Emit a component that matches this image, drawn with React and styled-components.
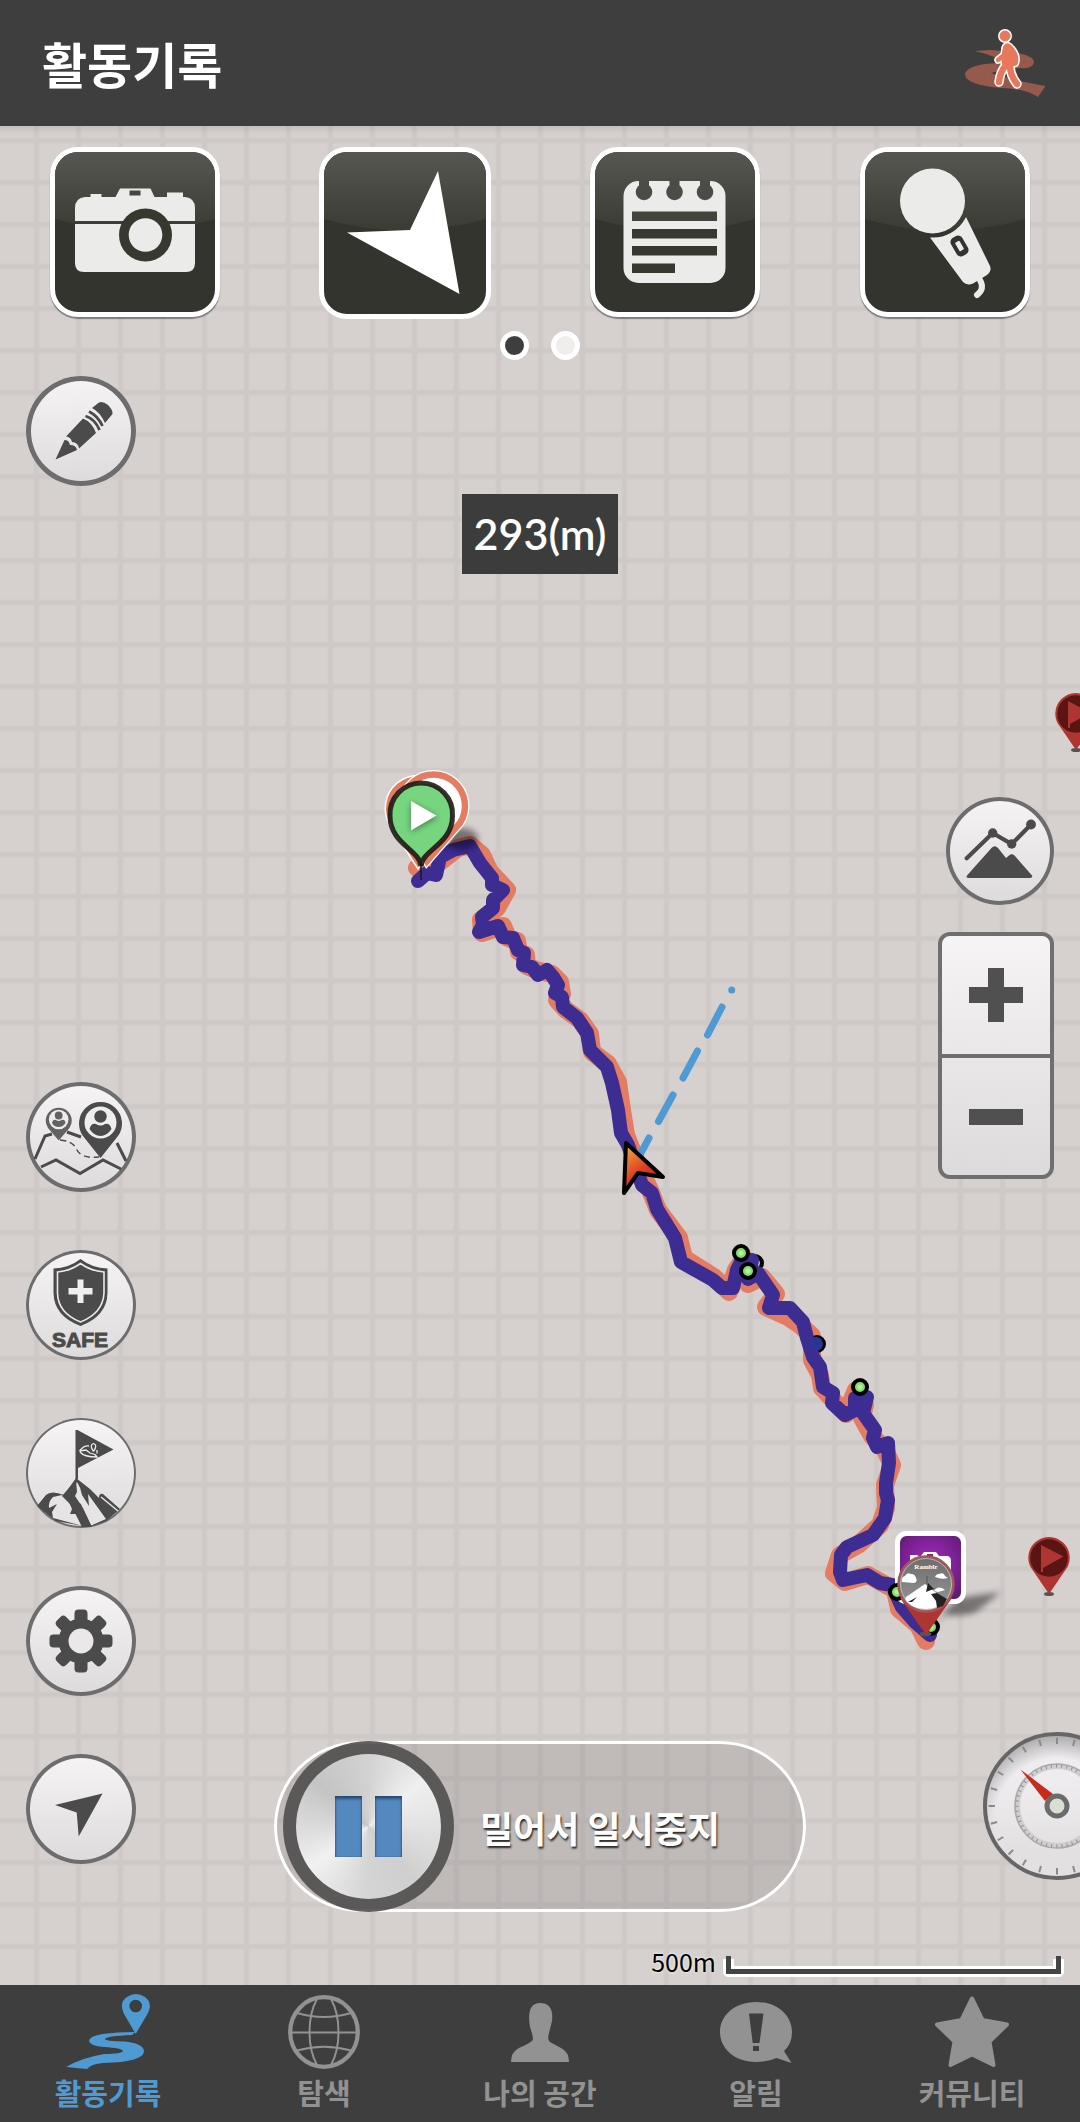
import React, { useState } from 'react';
import styled, { createGlobalStyle, css } from 'styled-components';

const GlobalStyle = createGlobalStyle`
  * {
    box-sizing: border-box;
  }
  body {
    margin: 0;
    font-family: 'Noto Sans CJK KR', sans-serif;
    background: #3e3e3e;
  }
  button {
    padding: 0;
    border: 0;
    background: none;
    color: inherit;
    font: inherit;
    cursor: pointer;
  }
  svg {
    display: block;
  }
`;

const Page = styled.div`
  display: flex;
  flex-direction: column;
  min-height: 100vh;
  overflow: hidden;
`;

const Header = styled.header`
  display: flex;
  align-items: center;
  justify-content: space-between;
  padding: 28px 32px 28px 42px;
  background: #3e3e3e;
`;

const Title = styled.h1`
  margin: 0;
  color: #fff;
  font-size: 49px;
  font-weight: 700;
  line-height: 70px;
`;

const MapArea = styled.main`
  position: relative;
  isolation: isolate;
  flex: 1;
  display: flex;
  flex-direction: column;
  padding: 21px 0 8px;
  background-color: #d6d0cf;
  background-image: linear-gradient(rgba(0, 0, 0, 0.08), transparent 8px),
    linear-gradient(
      90deg,
      transparent 33px,
      #cec8c7 35px,
      #cec8c7 38px,
      transparent 40px
    ),
    linear-gradient(
      transparent 11px,
      #cec8c7 13px,
      #cec8c7 16px,
      transparent 18px
    );
  background-size: 100% 8px, 42px 42px, 42px 42px;
  background-repeat: repeat-x, repeat, repeat;
`;

const RouteLayer = styled.svg`
  position: absolute;
  inset: 0;
  z-index: -1;
  width: 100%;
  height: 100%;
`;

const Tools = styled.div`
  display: grid;
  grid-template-columns: repeat(4, 1fr);
  justify-items: center;
  align-items: start;
`;

const ToolButton = styled.button`
  overflow: hidden;
  border: 5px solid #fff;
  border-radius: 28px;
  background: #33342d;
  box-shadow: ${(props) =>
    props.$flat ? 'none' : '0 2px 1px rgba(0, 0, 0, 0.4)'};
`;

const Dots = styled.div`
  display: flex;
  justify-content: center;
  gap: 22px;
  padding: 12px 0 16px;
`;

const Dot = styled.button`
  width: 29px;
  height: 29px;
  border: 5px solid #fff;
  border-radius: 50%;
  background: ${(props) => (props.$active ? '#3e3e3e' : '#efeeec')};
`;

const Stage = styled.div`
  flex: 1;
  display: grid;
  grid-template-columns: 1fr auto 1fr;
`;

const Column = styled.div`
  display: flex;
  flex-direction: column;
`;

const LeftColumn = styled(Column)`
  align-items: flex-start;
  padding: 0 0 48px 26px;
`;

const CenterColumn = styled(Column)`
  align-items: center;
  justify-content: space-between;
  padding-top: 118px;
`;

const RightColumn = styled(Column)`
  align-items: flex-end;
  gap: 27px;
  padding: 421px 26px 32px 0;
`;

const ButtonStack = styled.div`
  display: flex;
  flex-direction: column;
  gap: 58px;
  margin-top: auto;
`;

const glass = css`
  background: linear-gradient(
    rgba(248, 246, 247, 0.95),
    rgba(221, 219, 220, 0.95)
  );
`;

const RoundButton = styled.button`
  ${glass}
  width: ${(props) => props.$size || 110}px;
  height: ${(props) => props.$size || 110}px;
  overflow: hidden;
  border-radius: 50%;
  box-shadow: inset 0 0 0 ${(props) => props.$ring || 4}px #6e6d6d;
  color: #4b4b4b;
`;

const Distance = styled.div`
  padding: 10px 12px;
  background: #3c3c3c;
  color: #fff;
  font-family: Lato, 'Noto Sans CJK KR', sans-serif;
  font-size: 43px;
  font-weight: 600;
  line-height: 60px;
`;

const SlideTrack = styled.div`
  display: flex;
  align-items: center;
  gap: 26px;
  width: 532px;
  padding-left: 9px;
  border-radius: 86px;
  background: rgba(0, 0, 0, 0.1);
  box-shadow: inset 0 0 0 3px #fff;
`;

const Knob = styled.button`
  display: flex;
  align-items: center;
  justify-content: center;
  gap: 13px;
  width: 171px;
  height: 171px;
  border: 13px solid rgba(80, 78, 78, 0.9);
  border-radius: 50%;
  background: conic-gradient(
      from 0deg,
      #d2d2d2,
      #efefef 50deg,
      #e6e6e6 80deg,
      #cfcfcf 140deg,
      #d4d4d4 180deg,
      #f1f1f1 235deg,
      #dedede 265deg,
      #c4c4c4 310deg,
      #d2d2d2
    )
    padding-box;
`;

const PauseBar = styled.span`
  width: 27px;
  height: 61px;
  background: #5489bf;
  box-shadow: inset 0 3px 3px rgba(0, 20, 50, 0.5),
    inset 0 0 2px rgba(0, 20, 50, 0.4);
`;

const SlideLabel = styled.span`
  color: #fff;
  font-size: 36px;
  font-weight: 700;
  line-height: 52px;
  text-shadow: 1px 2px 2px rgba(0, 0, 0, 0.8);
`;

const ZoomBox = styled.div`
  ${glass}
  display: flex;
  flex-direction: column;
  width: 116px;
  overflow: hidden;
  border: 4px solid #6f6f6f;
  border-radius: 12px;
`;

const ZoomButton = styled.button`
  display: flex;
  align-items: center;
  justify-content: center;
  height: 118px;
  color: #505050;

  & + & {
    height: 121px;
    border-top: 4px solid #6f6f6f;
  }
`;

const CompassButton = styled.button`
  margin: auto -77px 0 0;
`;

const Scale = styled.div`
  display: flex;
  align-items: flex-end;
  justify-content: flex-end;
  gap: 7px;
  padding: 33px 16px 0 0;
  color: #000;
  font-size: 25px;
  font-weight: 400;
  line-height: 32px;
  text-shadow: 0 0 3px #fff;
`;

const TabBar = styled.nav`
  display: grid;
  grid-template-columns: repeat(5, 1fr);
  padding: 8px 0 9px;
  background: #3e3e3e;
`;

const Tab = styled.button`
  display: flex;
  flex-direction: column;
  align-items: center;
  color: ${(props) => (props.$active ? '#4f9ad3' : '#929292')};
  font-size: 29px;
  font-weight: 700;
  line-height: 42px;
`;

const TabIcon = styled.span`
  display: flex;
  align-items: center;
  height: 78px;
`;

const ToolIcon = ({ id, size = 160, children }) => (
  <svg width={size} height={size} viewBox={`0 0 ${size} ${size}`}>
    <defs>
      <linearGradient id={id} x1="0" y1="0" x2="0" y2="1">
        <stop offset="0" stopColor="#565750" />
        <stop offset="1" stopColor="#3a3b33" />
      </linearGradient>
    </defs>
    <path
      d={`M0 0H${size}V67Q${size / 2} 90 0 67Z`}
      fill={`url(#${id})`}
    />
    {children}
  </svg>
);

const CameraIcon = () => (
  <ToolIcon id="gloss-camera">
    <path
      fill="#ebebe9"
      d="M30 45H35.500V42H46.500V45H60.500L65 36.500H95.500L99.500 45H112V40.500H128V45H130Q140 46 140 56V69H20V56Q20 46 30 45Z"
    />
    <path fill="#ebebe9" d="M20 72H140V111Q140 120 131 120H29Q20 120 20 111Z" />
    <rect x="74.500" y="38.500" width="11" height="5" fill="#45463f" />
    <circle cx="90.500" cy="83" r="26.500" fill="#37382f" />
    <circle cx="90.500" cy="83" r="16.800" fill="#ebebe9" />
  </ToolIcon>
);

const DirectionIcon = () => (
  <ToolIcon id="gloss-direction" size={162}>
    <path fill="#fff" d="M114 19L135.500 142L23 80.500L86 78Z" />
  </ToolIcon>
);

const NoteIcon = () => (
  <ToolIcon id="gloss-note">
    <rect x="28.500" y="29" width="102" height="102" rx="15" fill="#ebebe9" />
    <g fill="#4b4c45">
      {[49, 79.5, 110].map((x) => (
        <React.Fragment key={x}>
          <rect x={x - 5} y="28" width="10" height="10" />
          <circle cx={x} cy="40" r="8.300" />
        </React.Fragment>
      ))}
    </g>
    <g fill="#37382f">
      <rect x="37" y="59.500" width="85" height="9.500" fill="#43443c" />
      <rect x="37" y="77" width="85" height="9.500" />
      <rect x="37" y="94" width="85" height="9.500" />
      <rect x="37" y="111.500" width="43" height="9.500" />
    </g>
  </ToolIcon>
);

const MicIcon = () => (
  <ToolIcon id="gloss-mic">
    <circle cx="67.500" cy="49" r="32.500" fill="#ebebe9" />
    <path
      fill="#ebebe9"
      d="M65 85.500A37 37 0 0 0 101 65L125 114Q127 119 122 123L108 131.500Q102 134 98 130Z"
    />
    <path
      d="M115 128Q120 137 112 143"
      fill="none"
      stroke="#ebebe9"
      strokeWidth="6"
      strokeLinecap="round"
    />
    <g transform="rotate(-30 94.500 94)">
      <rect x="88" y="83.500" width="13" height="21" rx="5" fill="#33342d" />
      <rect x="92" y="89" width="5" height="10" rx="1" fill="#ebebe9" />
    </g>
  </ToolIcon>
);

const RoundIcon = ({ size = 110, children }) => (
  <svg
    width={size}
    height={size}
    viewBox={`0 0 ${size} ${size}`}
    fill="currentColor"
  >
    {children}
  </svg>
);

const PencilIcon = () => (
  <RoundIcon>
    <path d="M29.500 83.500L38.500 64Q43 64 44 69Q50 69 51 74Z" />
    <path d="M40 60.500L57 42.500Q66 46 70 57L53 72.500Q52 66 46 66Q45 61 40 60.500Z" />
    <path d="M66 32L73 26.500Q77 25 82 29Q87 34 86.500 38L79 47Q74 36 66 32Z" />
    <g fill="none" stroke="currentColor" strokeWidth="2.800">
      <path d="M59.500 40Q69 43 73.500 54" />
      <path d="M63 35.500Q72 40 76.500 50" />
    </g>
  </RoundIcon>
);

const PersonPinsIcon = () => (
  <RoundIcon>
    <g fill="none" stroke="currentColor" strokeWidth="3">
      <path d="M9 77L19 54L26 52M41 50L55 55M91 61L100 79" />
      <path d="M15 85L30 78L54 91.500L77 78L95 87" />
      <path
        d="M34 58Q46 59 50 66Q54 77 73 75"
        strokeWidth="1.500"
        strokeDasharray="6 4"
      />
    </g>
    <path d="M74.500 76L57 54A21.500 21.500 0 1 1 92 54Z" />
    <circle cx="74.500" cy="40.500" r="16" fill="#efedee" />
    <circle cx="74.500" cy="34.500" r="6.200" />
    <path d="M63.500 47Q65 41 70 42Q74.500 45 79 42Q84 41 85.500 47Q81 54 74.500 54Q68 54 63.500 47Z" />
    <g opacity="0.850">
      <path d="M32.700 58.500L22 46A13 13 0 1 1 43.500 46Z" />
      <circle cx="32.700" cy="37.500" r="9.800" fill="#efedee" />
      <circle cx="32.700" cy="33.500" r="3.900" />
      <path d="M26 41Q27 37 30 38Q32.700 40 35.500 38Q39 37 39.500 41Q37 45 32.700 45Q28 45 26 41Z" />
    </g>
  </RoundIcon>
);

const SafeText = styled.text`
  font-family: 'Liberation Sans', sans-serif;
  font-size: 21px;
  font-weight: 700;
`;

const SafeIcon = () => (
  <RoundIcon>
    <path d="M54.500 9Q66 18 81.500 18.500V43Q81 66 54.500 76Q28 66 27.500 43V18.500Q43 18 54.500 9Z" />
    <path
      d="M54.500 13.500Q65 21 78 22V43Q77 63 54.500 72Q32 63 31.500 43V22Q44 21 54.500 13.500Z"
      fill="none"
      stroke="#eceaeb"
      strokeWidth="1.600"
    />
    <path
      d="M51.500 29.500H57.500V38H66.500V44.500H57.500V53H51.500V44.500H42.500V38H51.500Z"
      fill="#f0eeef"
    />
    <SafeText
      x="54"
      y="97"
      textAnchor="middle"
      stroke="currentColor"
      strokeWidth="1"
    >
      SAFE
    </SafeText>
  </RoundIcon>
);

const SummitIcon = () => (
  <RoundIcon>
    <path d="M49.500 12H51.500L87.500 31.500L52 50V61H49.500Z" />
    <path
      d="M53.500 33Q58 27 63 28M54 34Q58 39 71 39L69 36.500M71 32V35.500M53.500 33L60 32L64 35L69 36.500M67.500 33.500Q63 27 67.500 25.500Q72 27 67.500 33.500"
      fill="none"
      stroke="#efedee"
      strokeWidth="1.300"
    />
    <path d="M11 88L20 77Q25 72 38 77L50 60L64 71L73 80Q73 75 77 76L94 91L80 103L63 109L30 103Z" />
    <g fill="#e6e4e5">
      <path d="M23 90Q22 84 27 79L36 77L42 82L46 91L44 96L51 96L57 108L27 100L26 94L31 86Z" />
      <path d="M41 79L51 64Q55 70 56 77L63 88L62 76L80 101L64 108L57 93L55 86Z" />
    </g>
    <path d="M36 78L50 62L51 74L49 78L57 90L66 109H56L49 95L46 96L48 90Z" />
    <path d="M75 79L92 93" stroke="#e6e4e5" strokeWidth="1.500" />
  </RoundIcon>
);

const GearIcon = () => (
  <RoundIcon>
    {[0, 45, 90, 135].map((angle) => (
      <rect
        key={angle}
        x="48.500"
        y="23.500"
        width="13"
        height="63"
        rx="4"
        transform={`rotate(${angle} 55 55)`}
      />
    ))}
    <circle cx="55" cy="55" r="22.500" />
    <circle cx="55" cy="55" r="12.500" fill="#eae8e9" />
  </RoundIcon>
);

const LocateIcon = () => (
  <RoundIcon>
    <path d="M76.500 39.500L52.700 82.500L50.700 58.500L29 51Z" />
  </RoundIcon>
);

const AltitudeIcon = () => (
  <RoundIcon size={108}>
    <path
      d="M20.700 61.300L46.700 36L65.700 47L85 27.500"
      fill="none"
      stroke="currentColor"
      strokeWidth="4.200"
      strokeLinecap="round"
    />
    <circle cx="46.700" cy="36" r="4.700" />
    <circle cx="65.700" cy="47" r="4.700" />
    <circle cx="85" cy="27.500" r="4.900" />
    <path d="M21 78.500L45.500 51Q48.700 47.500 52 51L60 61L63 58.500Q65.700 56 68.500 58.500L86 78.500Q87 81 84 81H23Q19.500 81 21 78.500Z" />
  </RoundIcon>
);

const ticks = Array.from({ length: 24 }, (_, i) => i * 15);

const CompassIcon = () => (
  <svg width="148" height="148" viewBox="0 0 148 148">
    <defs>
      <radialGradient id="dial" cx="0.500" cy="0.600" r="0.600">
        <stop offset="0.720" stopColor="#eeecee" />
        <stop offset="1" stopColor="#a9a7a8" />
      </radialGradient>
      <linearGradient id="dial-fade" x1="0" y1="0" x2="0" y2="1">
        <stop offset="0.300" stopColor="#e6e4e5" stopOpacity="0" />
        <stop offset="0.800" stopColor="#e2e0e1" />
      </linearGradient>
    </defs>
    <circle cx="74" cy="74" r="72" fill="url(#dial)" />
    <circle
      cx="74"
      cy="74"
      r="72"
      fill="url(#dial-fade)"
      stroke="#666"
      strokeWidth="4"
    />
    {ticks.map((angle) => (
      <path
        key={angle}
        d="M74 5.500V12"
        stroke="#8b8b8b"
        strokeWidth="2"
        transform={`rotate(${angle} 74 74)`}
      />
    ))}
    <g fill="none">
      <circle cx="74" cy="74" r="39.500" stroke="#d0cfcf" strokeWidth="5" />
      <circle cx="74" cy="74" r="42" stroke="#a9a9a9" strokeWidth="1.500" />
      <circle
        cx="74"
        cy="74"
        r="40"
        stroke="#8f8f8f"
        strokeWidth="3"
        strokeDasharray="1 4.200"
      />
    </g>
    <path d="M37.500 37.500L70 62L62 69Z" fill="#c82a1c" />
    <circle
      cx="74"
      cy="74"
      r="10"
      fill="#dadfd5"
      stroke="#6b6b6b"
      strokeWidth="5"
    />
  </svg>
);

const WalkerIcon = () => (
  <svg width="84" height="70" viewBox="0 0 84 70">
    <path
      fill="#955a4c"
      d="M11 23L27 22Q70 25 70 34Q69 41 57 40Q40 41 27 45Q40 50 81.500 58L74 69Q62 61 38 60Q1 57 1 46Q4 36 34 35Q40 30 11 23Z"
    />
    {[
      { color: '#fff', extra: 3 },
      { color: '#e8775c', extra: 0 },
    ].map(({ color, extra }) => (
      <g
        key={color}
        fill={color}
        stroke={color}
        strokeLinecap="round"
        strokeLinejoin="round"
      >
        <circle cx="41" cy="8" r="5" strokeWidth={1 + extra} />
        <path
          d="M41 18Q44 15 48 20Q55 28 52 36L43 38Q39 37 39 33Z"
          strokeWidth={3 + extra}
        />
        <path
          d="M41 20L40 27L34 32"
          fill="none"
          strokeWidth={4.5 + extra}
        />
        <path
          d="M42 37Q36 44 35 54M46 38Q46 47 53 56"
          fill="none"
          strokeWidth={6.5 + extra}
        />
      </g>
    ))}
  </svg>
);

const RouteTabIcon = () => (
  <svg width="84" height="76" viewBox="0 0 84 76" fill="currentColor">
    <path
      fillRule="evenodd"
      d="M69.700 40L57.500 19Q53 8 61 3Q69.700 -3 79 3Q87 9 82 19ZM69.700 5.700A6.300 6.300 0 1 0 69.700 18.300A6.300 6.300 0 1 0 69.700 5.700Z"
    />
    <path d="M69 38Q50 38 37 40Q23 42 23 47Q24 52 38 53Q56 54 57 57Q56 60 38 60Q15 64 0 73L21 75Q25 70 37 69Q78 68 78 57Q77 49 58 47.500Q39 47 39 45Q40 42 66 41Z" />
  </svg>
);

const GlobeIcon = () => (
  <svg
    width="72"
    height="74"
    viewBox="0 0 72 74"
    fill="none"
    stroke="currentColor"
    strokeWidth="2"
  >
    <ellipse cx="36" cy="37" rx="33.800" ry="34.800" strokeWidth="4.300" />
    <path d="M2 37.500H70M9 18Q36 26 63 18M9 55.500Q36 48 63 55.500" />
    <path d="M29 4C19 22 19 52 29 70M43 4C53 22 53 52 43 70" />
  </svg>
);

const PersonIcon = () => (
  <svg width="58" height="59" viewBox="0 0 58 59" fill="currentColor">
    <path d="M0 59Q0 49 8 45Q22 39 22 36Q22 33 19 24Q15 0 29 0Q43 0 41 18L38 30Q36 37 39 39L50 45Q58 49 58 59Z" />
  </svg>
);

const AlertIcon = () => (
  <svg width="72" height="61" viewBox="0 0 72 61" fill="currentColor">
    <path d="M36 0C58 0 72 14 72 30Q72 42 64 49L71.500 61L56.500 56Q48 60 36 60C14 60 0 46 0 30C0 14 14 0 36 0Z" />
    <path
      fill="#3e3e3e"
      d="M29 11.500H43.500L39.500 41H32.700ZM33 44H39V49H33Z"
    />
  </svg>
);

const StarIcon = () => (
  <svg width="76" height="74" viewBox="-1 -1 76 74">
    <path
      fill="currentColor"
      stroke="currentColor"
      strokeWidth="4"
      strokeLinejoin="round"
      d="M37 2.500L47.500 24L72 28.500L54.500 45.500L58.500 69L37 58.500L15.500 69L19.500 45.500L2 28.500L26.500 24Z"
    />
  </svg>
);

const plannedRoute =
  '417,868 440,862 458,848 470,845 482,855 490,872 507,890 497,908 481,920 482,933 503,926 508,938 517,941 519,952 526,955 527,966 536,970 552,974 560,982 562,994 557,1000 566,1010 580,1020 590,1034 592,1052 608,1064 618,1082 622,1110 626,1135 636,1160 650,1190 658,1210 679,1238 684,1258 714,1277 729,1292 736,1270 744,1258 748,1284 762,1277 776,1294 766,1307 788,1317 800,1325 812,1336 812,1360 820,1375 822,1388 835,1402 846,1414 856,1390 865,1405 862,1418 872,1436 885,1450 892,1465 885,1485 886,1508 880,1525 858,1545 840,1555 834,1573 845,1582 868,1575 895,1590 899,1609 918,1625 926,1641';

const walkedRoute =
  '418,881 427,873 436,875 440,857 453,850 470,846 480,863 492,878 492,885 503,890 493,900 493,908 482,917 483,925 479,932 498,926 503,937 513,938 518,950 524,953 523,965 532,967 538,975 547,970 553,977 558,985 555,993 562,997 563,1007 577,1018 587,1033 590,1050 607,1067 612,1083 618,1110 621,1133 628,1145 642,1185 652,1193 657,1209 675,1238 681,1262 713,1280 722,1288 733,1288 737,1270 742,1260 752,1260 748,1279 758,1273 773,1295 769,1308 790,1308 803,1322 807,1338 813,1357 820,1367 823,1387 833,1393 832,1403 845,1415 855,1410 855,1398 867,1397 863,1413 875,1430 873,1438 877,1447 888,1443 889,1463 886,1483 886,1493 888,1500 885,1518 873,1535 847,1547 841,1555 840,1572 843,1580 867,1575 880,1583 892,1585 902,1607 915,1622 930,1635';

const Waypoint = ({ x, y }) => (
  <g>
    <circle cx={x} cy={y} r="7" fill="#86dd70" stroke="#000" strokeWidth="4" />
    <circle cx={x} cy={y} r="2.500" fill="#b4f09e" />
  </g>
);

const FlagPin = ({ x, y }) => (
  <g transform={`translate(${x} ${y})`}>
    <ellipse cy="36" rx="5" ry="2" fill="#555" />
    <path d="M0 36L-18.500 9A20.700 20.700 0 1 1 18.500 9Z" fill="#ad3633" />
    <circle r="18.800" fill="#5a1513" />
    <path d="M-8 -13L14.500 -1.500L-6 10V14H-8Z" fill="#ad3633" />
  </g>
);

const BadgeText = styled.text`
  font-family: 'Liberation Serif', serif;
  font-size: 7px;
  font-weight: 700;
`;

const SummitBadge = () => (
  <g>
    <path
      d="M930 1628L958 1598L1001 1592L976 1612Q962 1617 945 1615Z"
      fill="#000"
      opacity="0.450"
      filter="url(#soft)"
    />
    <rect
      x="897.500"
      y="1533.500"
      width="66"
      height="68"
      rx="9"
      fill="url(#photo)"
      stroke="#fff"
      strokeWidth="5"
    />
    <path
      d="M910 1555H917L920 1557L924 1552H936L939 1556H948Q951 1557 951 1561V1580H910Z"
      fill="#fff"
    />
    <rect x="927" y="1554" width="6" height="3" fill="#7d2397" />
    <Waypoint x={897} y={1592} />
    <Waypoint x={931} y={1627} />
    <ellipse cx="925.500" cy="1634" rx="6" ry="2.500" fill="#555" />
    <path d="M926 1635L900 1598H952Z" fill="#ad3633" />
    <circle
      cx="926"
      cy="1584"
      r="27.500"
      fill="url(#badge)"
      stroke="#a5565a"
      strokeWidth="2.500"
    />
    <circle
      cx="926"
      cy="1584"
      r="25.500"
      fill="none"
      stroke="#ddd"
      strokeWidth="1"
      opacity="0.600"
    />
    <g fill="#fff">
      <path d="M902 1582Q901 1577 905 1576Q907 1572 911 1574Q915 1574 916 1578Q918 1582 914 1583Z" />
      <path d="M935 1577Q936 1574 939 1574Q944 1572 945 1576L948 1578Q942 1580 935 1577Z" />
      <path d="M934 1591Q937 1586 942 1588L945 1590L938 1592Z" />
      <path d="M906 1601Q904 1597 909 1595L925 1584L935 1592L947 1600Q938 1609 926 1609Q913 1609 906 1601Z" />
    </g>
    <path
      d="M928 1583L934 1589L931 1590L926 1592Z M931 1594L937 1593L942 1596L947 1599L943 1606L937 1608L936 1601Z M908 1602L917 1597L912 1602Z"
      fill="#222"
    />
    <path d="M927 1576V1584" stroke="#555" strokeWidth="1" />
    <BadgeText x="926" y="1569" textAnchor="middle" fill="#fff">
      Ramblr
    </BadgeText>
  </g>
);

const StartPins = () => (
  <g>
    <ellipse
      cx="461"
      cy="839"
      rx="17"
      ry="11"
      fill="#000"
      opacity="0.450"
      filter="url(#soft)"
    />
    <g fill="#fff" stroke="#fff" strokeWidth="9">
      <path d="M418 862L393 823A29 29 0 1 1 443 823Z" />
      <path
        d="M418 862L393 823A29 29 0 1 1 443 823Z"
        stroke="#e37c63"
        strokeWidth="6"
      />
      <path d="M427 861L407 823A31.500 31.500 0 1 1 460 823Q440 846 427 861Z" />
      <path
        d="M427 861L407 823A31.500 31.500 0 1 1 460 823Q440 846 427 861Z"
        stroke="#e37c63"
        strokeWidth="6.500"
      />
    </g>
    <path
      d="M421 866C420 850 390 844 390 816A31.300 31.300 0 1 1 452.500 816C452.500 844 422 850 421 866Z"
      fill="#77d580"
      stroke="#1c1512"
      strokeOpacity="0.880"
      strokeWidth="5"
    />
    <path d="M421 860V880" stroke="#1c1512" strokeWidth="2" opacity="0.700" />
    <path
      d="M411 803L438 817L411 832Z"
      fill="#000"
      opacity="0.400"
      filter="url(#soft)"
    />
    <path d="M411 801L436.500 815.500L411 830.500Z" fill="#fff" />
  </g>
);

const RouteMap = () => (
  <RouteLayer
    viewBox="0 126 1080 1859"
    preserveAspectRatio="xMidYMid slice"
    aria-hidden="true"
  >
    <defs>
      <filter id="soft" x="-50%" y="-50%" width="200%" height="200%">
        <feGaussianBlur stdDeviation="3" />
      </filter>
      <radialGradient id="photo" cy="0.450" r="0.650">
        <stop offset="0" stopColor="#a82bc4" />
        <stop offset="1" stopColor="#5d1a72" />
      </radialGradient>
      <linearGradient id="badge" x1="0" y1="0" x2="0" y2="1">
        <stop offset="0" stopColor="#6c6c6c" />
        <stop offset="1" stopColor="#999" />
      </linearGradient>
      <linearGradient id="cursor" x1="0" y1="0" x2="0.600" y2="1">
        <stop offset="0.100" stopColor="#eea03c" />
        <stop offset="0.600" stopColor="#dc3d22" />
        <stop offset="1" stopColor="#c01f3a" />
      </linearGradient>
    </defs>

    <g fill="none" strokeLinecap="round" strokeLinejoin="round">
      <polyline points={plannedRoute} stroke="#e37c63" strokeWidth="18" />
    </g>
    <Waypoint x={755} y={1263} />
    <Waypoint x={817} y={1344} />
    <g fill="none" strokeLinecap="round" strokeLinejoin="round">
      <polyline points={walkedRoute} stroke="#3d2c92" strokeWidth="14" />
      <path
        d="M731.700 990V990.100M722 1007L707.500 1035M697.500 1051L683 1078M673 1095L658.500 1121.500M649 1138L636 1162"
        stroke="#4f9ad3"
        strokeWidth="7"
      />
    </g>
    <circle cx="816" cy="1344" r="7" fill="#2c3594" />

    <Waypoint x={741} y={1253} />
    <Waypoint x={748} y={1271} />
    <Waypoint x={860} y={1387} />

    <StartPins />
    <SummitBadge />
    <FlagPin x={1076} y={714} />
    <FlagPin x={1049} y={1558} />

    <path
      d="M626 1143L663 1177L638 1173L624 1193Z"
      fill="url(#cursor)"
      stroke="#000"
      strokeWidth="4"
      strokeLinejoin="round"
    />
  </RouteLayer>
);

const tabs = [
  { label: '활동기록', Icon: RouteTabIcon },
  { label: '탐색', Icon: GlobeIcon },
  { label: '나의 공간', Icon: PersonIcon },
  { label: '알림', Icon: AlertIcon },
  { label: '커뮤니티', Icon: StarIcon },
];

const App = () => {
  const [activeTab, setActiveTab] = useState('활동기록');
  const [page, setPage] = useState(0);

  return (
    <Page>
      <GlobalStyle />
      <Header>
        <Title>활동기록</Title>
        <button type="button" aria-label="걷기">
          <WalkerIcon />
        </button>
      </Header>

      <MapArea>
        <RouteMap />
        <Tools>
          <ToolButton type="button" aria-label="사진">
            <CameraIcon />
          </ToolButton>
          <ToolButton type="button" aria-label="방향" $flat>
            <DirectionIcon />
          </ToolButton>
          <ToolButton type="button" aria-label="메모">
            <NoteIcon />
          </ToolButton>
          <ToolButton type="button" aria-label="음성">
            <MicIcon />
          </ToolButton>
        </Tools>
        <Dots>
          {[0, 1].map((n) => (
            <Dot
              key={n}
              type="button"
              aria-label={`${n + 1}`}
              $active={page === n}
              onClick={() => setPage(n)}
            />
          ))}
        </Dots>

        <Stage>
          <LeftColumn>
            <RoundButton type="button" aria-label="편집" $ring={5}>
              <PencilIcon />
            </RoundButton>
            <ButtonStack>
              <RoundButton type="button" aria-label="친구 위치">
                <PersonPinsIcon />
              </RoundButton>
              <RoundButton type="button" aria-label="SAFE" $ring={3}>
                <SafeIcon />
              </RoundButton>
              <RoundButton type="button" aria-label="정상" $ring={2}>
                <SummitIcon />
              </RoundButton>
              <RoundButton type="button" aria-label="설정">
                <GearIcon />
              </RoundButton>
              <RoundButton type="button" aria-label="내 위치">
                <LocateIcon />
              </RoundButton>
            </ButtonStack>
          </LeftColumn>

          <CenterColumn>
            <Distance>293(m)</Distance>
            <SlideTrack>
              <Knob type="button" aria-labelledby="slide-label">
                <PauseBar />
                <PauseBar />
              </Knob>
              <SlideLabel id="slide-label">밀어서 일시중지</SlideLabel>
            </SlideTrack>
          </CenterColumn>

          <RightColumn>
            <RoundButton type="button" aria-label="고도" $size={108}>
              <AltitudeIcon />
            </RoundButton>
            <ZoomBox>
              <ZoomButton type="button" aria-label="확대">
                <svg width="54" height="54" fill="currentColor">
                  <path d="M19 0H35V19H54V35H35V54H19V35H0V19H19Z" />
                </svg>
              </ZoomButton>
              <ZoomButton type="button" aria-label="축소">
                <svg width="54" height="16" fill="currentColor">
                  <path d="M0 0H54V16H0Z" />
                </svg>
              </ZoomButton>
            </ZoomBox>
            <CompassButton type="button" aria-label="나침반">
              <CompassIcon />
            </CompassButton>
          </RightColumn>
        </Stage>

        <Scale>
          500m
          <svg width="341" height="24" fill="none" strokeLinejoin="round">
            <path d="M5.500 6V18.500H335.500V6" stroke="#fff" strokeWidth="11" />
            <path
              d="M5.500 3V18.500H335.500V3"
              stroke="#444"
              strokeWidth="5"
              strokeLinejoin="miter"
            />
          </svg>
        </Scale>
      </MapArea>

      <TabBar>
        {tabs.map(({ label, Icon }) => (
          <Tab
            key={label}
            type="button"
            $active={label === activeTab}
            onClick={() => setActiveTab(label)}
          >
            <TabIcon>
              <Icon />
            </TabIcon>
            {label}
          </Tab>
        ))}
      </TabBar>
    </Page>
  );
};

export default App;
